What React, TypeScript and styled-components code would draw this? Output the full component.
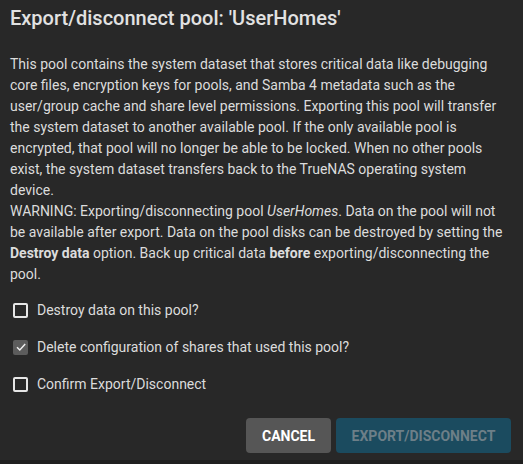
import styled, { createGlobalStyle } from 'styled-components';

const GlobalStyle = createGlobalStyle`
  html, body {
    margin: 0;
    padding: 0;
    background: #1f1f1f;
  }
  body {
    font-family: Roboto, "Liberation Sans", sans-serif;
  }
`;

interface CheckItem {
  label: string;
  checked: boolean;
}

const checks: CheckItem[] = [
  { label: 'Destroy data on this pool?', checked: false },
  { label: 'Delete configuration of shares that used this pool?', checked: true },
  { label: 'Confirm Export/Disconnect', checked: false },
];

const App: React.FC = () => {
  return (
    <>
      <GlobalStyle />
      <Dialog>
        <Title>Export/disconnect pool: 'UserHomes'</Title>
        <Body>
          This pool contains the system dataset that stores critical data like debugging core
          files, encryption keys for pools, and Samba 4 metadata such as the user/group cache and
          share level permissions. Exporting this pool will transfer the system dataset to another
          available pool. If the only available pool is encrypted, that pool will no longer be able
          to be locked. When no other pools exist, the system dataset transfers back to the
          TrueNAS operating system device.
          <br />
          WARNING: Exporting/disconnecting pool <em>UserHomes</em>. Data on the pool will not be
          available after export. Data on the pool disks can be destroyed by setting the{' '}
          <b>Destroy data</b> option. Back up critical data <b>before</b> exporting/disconnecting
          the pool.
        </Body>
        <CheckList>
          {checks.map((item) => (
            <CheckRow key={item.label}>
              <Box checked={item.checked}>
                {item.checked && (
                  <svg width="12" height="12" viewBox="0 0 12 12">
                    <path d="M2 6.2 L4.8 9 L10.2 3" fill="none" stroke="#f2f2f2" strokeWidth="1.4" />
                  </svg>
                )}
              </Box>
              <CheckLabel>{item.label}</CheckLabel>
            </CheckRow>
          ))}
        </CheckList>
        <Actions>
          <CancelButton>CANCEL</CancelButton>
          <PrimaryButton disabled>EXPORT/DISCONNECT</PrimaryButton>
        </Actions>
      </Dialog>
    </>
  );
};

const Dialog = styled.div`
  width: 523px;
  height: 460px;
  box-sizing: border-box;
  background: #282828;
  padding: 6px 10px 0 10px;
  display: flex;
  flex-direction: column;
  color: #dedede;
`;

const Title = styled.h2`
  margin: 0;
  font-size: 20px;
  font-weight: 500;
  line-height: 24px;
  color: #e2e2e2;
`;

const Body = styled.div`
  margin-top: 24px;
  width: 503px;
  font-size: 14px;
  line-height: 21px;
  color: #dcdcdc;
  b {
    font-weight: 700;
  }
`;

const CheckList = styled.div`
  margin-top: 14px;
  display: flex;
  flex-direction: column;
  gap: 15px;
`;

const CheckRow = styled.label`
  display: flex;
  align-items: center;
  height: 22px;
  padding-left: 3px;
  gap: 9px;
`;

interface BoxProps {
  checked: boolean;
}
const Box = styled.span<BoxProps>`
  width: 15px;
  height: 15px;
  box-sizing: border-box;
  border-radius: 2px;
  border: ${({ checked }) => (checked ? 'none' : '2px solid #e6e6e6')};
  background: ${({ checked }) => (checked ? '#5c5c5c' : 'transparent')};
  display: flex;
  align-items: center;
  justify-content: center;
`;

const CheckLabel = styled.span`
  font-size: 14px;
  color: #dcdcdc;
`;

const Actions = styled.div`
  margin-top: auto;
  margin-bottom: 7px;
  display: flex;
  justify-content: flex-end;
  gap: 5px;
  padding-right: 2px;
`;

const CancelButton = styled.button`
  width: 85px;
  height: 35px;
  border: none;
  border-radius: 4px;
  background: #565656;
  color: #ffffff;
  font-family: Roboto, "Liberation Sans", sans-serif;
  font-size: 14px;
  font-weight: 700;
`;

const PrimaryButton = styled.button`
  width: 175px;
  height: 35px;
  border: none;
  border-radius: 4px;
  background: #1b4b5f;
  color: #6d7f88;
  font-family: Roboto, "Liberation Sans", sans-serif;
  font-size: 14px;
  font-weight: 700;
`;

export default App;
